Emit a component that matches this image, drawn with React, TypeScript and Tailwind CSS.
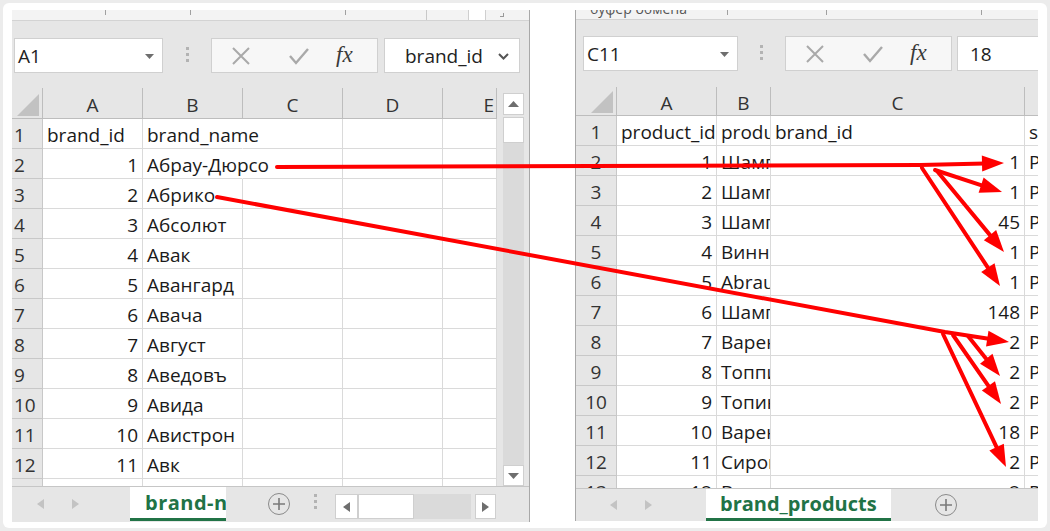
import React from "react";

type Cell = { t?: string; r?: boolean; over?: boolean };

const leftCols = ["w-[100px]", "w-[100px]", "w-[100px]", "w-[100px]", "w-[54px]"];
const rightCols = ["w-[100px]", "w-[54px]", "w-[254px]", "w-[40px]"];

const brands = [
  "Абрау-Дюрсо",
  "Абрико",
  "Абсолют",
  "Авак",
  "Авангард",
  "Авача",
  "Август",
  "Аведовъ",
  "Авида",
  "Авистрон",
  "Авк",
];

const products: [string, number][] = [
  ["Шампанское", 1],
  ["Шампанское", 1],
  ["Шампанское", 45],
  ["Винный напиток", 1],
  ["Abrau Light", 1],
  ["Шампанское", 148],
  ["Вареники", 2],
  ["Топпинг", 2],
  ["Топинамбур", 2],
  ["Вареники", 18],
  ["Сироп", 2],
];

const leftRows: Cell[][] = [
  [{ t: "brand_id" }, { t: "brand_name", over: true }, {}, {}, {}],
  ...brands.map((b, i) => [{ t: String(i + 1), r: true }, { t: b, over: i === 0 }, {}, {}, {}]),
  [{ t: "12", r: true }, { t: "Авто" }, {}, {}, {}],
];

const rightRows: Cell[][] = [
  [{ t: "product_id" }, { t: "product_name" }, { t: "brand_id" }, { t: "sku" }],
  ...products.map(([name, id], i) => [
    { t: String(i + 1), r: true },
    { t: name },
    { t: String(id), r: true },
    { t: "P" },
  ]),
  [{ t: "12", r: true }, { t: "Варенье" }, { t: "2", r: true }, { t: "P" }],
];

function GridRow({ num, cells, cols, headW }: { num: number; cells: Cell[]; cols: string[]; headW: string }) {
  return (
    <div className="flex h-[30px] shrink-0 bg-white">
      <div
        className={`${headW} flex shrink-0 items-center border-b border-r border-[#c8c8c8] bg-[#e6e6e6] pt-[4px] text-[19px] text-[#333] ${
          headW === "w-[31px]" ? "pl-[2px]" : "justify-center"
        }`}
      >
        {num}
      </div>
      {cells.map((c, i) => (
        <div
          key={i}
          className={`${cols[i]} flex shrink-0 items-center whitespace-nowrap border-b border-r border-[#dadada] px-[4px] pt-[4px] text-[19px] text-[#1a1a1a] ${
            c.r ? "justify-end" : ""
          } ${c.over ? "relative z-10 overflow-visible border-r-white" : "overflow-hidden"}`}
        >
          {c.t}
        </div>
      ))}
    </div>
  );
}

function HeaderRow({ letters, cols, headW }: { letters: string[]; cols: string[]; headW: string }) {
  return (
    <div className="flex h-full shrink-0">
      <div className={`${headW} flex shrink-0 items-end justify-end border-b border-r border-[#bdbdbd] bg-[#e6e6e6] pb-[2px] pr-[3px]`}>
        <svg width="22" height="22" viewBox="0 0 22 22">
          <polygon points="22,0 22,22 0,22" fill="#c2c2c2" />
        </svg>
      </div>
      {letters.map((l, i) => (
        <div
          key={i}
          className={`${cols[i]} flex shrink-0 items-center justify-center overflow-hidden border-b border-r border-[#bdbdbd] bg-[#e6e6e6] pt-[4px] text-[19px] text-[#333] ${
            i === letters.length - 1 && l === "E" ? "justify-end pr-[2px]" : ""
          }`}
        >
          {l}
        </div>
      ))}
    </div>
  );
}

function Dots() {
  return (
    <div className="flex flex-col gap-[3px]">
      <div className="h-[3px] w-[3px] bg-[#b3b3b3]" />
      <div className="h-[3px] w-[3px] bg-[#b3b3b3]" />
      <div className="h-[3px] w-[3px] bg-[#b3b3b3]" />
    </div>
  );
}

function FxBox() {
  return (
    <div className="flex h-[35px] w-[167px] shrink-0 items-center border border-[#d0d0d0] bg-[#f7f7f7]">
      <svg width="22" height="22" viewBox="0 0 22 22" className="ml-[18px]">
        <path d="M3 3 L19 19 M19 3 L3 19" stroke="#a9a9a9" strokeWidth="2" />
      </svg>
      <svg width="24" height="22" viewBox="0 0 24 22" className="ml-[35px]">
        <path d="M3 11 L9 18 L21 4" stroke="#a9a9a9" strokeWidth="2.4" fill="none" />
      </svg>
      <span className="ml-[25px] font-['Liberation_Serif',serif] text-[23px] italic text-[#3a3a3a]">fx</span>
    </div>
  );
}

function NameBox({ label, w }: { label: string; w: string }) {
  return (
    <div className={`${w} flex h-[35px] shrink-0 items-center justify-between border border-[#d0d0d0] bg-white pl-[3px] pr-[8px] pt-[2px] text-[19px] text-[#222]`}>
      <span>{label}</span>
      <svg width="9" height="6" viewBox="0 0 9 6">
        <polygon points="0,0 9,0 4.5,5" fill="#6e6e6e" />
      </svg>
    </div>
  );
}

function PlusCircle() {
  return (
    <div className="flex h-[22px] w-[22px] shrink-0 items-center justify-center rounded-full border-[1.5px] border-[#8a8a8a]">
      <svg width="12" height="12" viewBox="0 0 12 12">
        <path d="M6 0 V12 M0 6 H12" stroke="#7a7a7a" strokeWidth="1.6" />
      </svg>
    </div>
  );
}

function TabArrows() {
  return (
    <div className="flex items-center gap-[28px]">
      <svg width="7" height="10" viewBox="0 0 7 10">
        <polygon points="7,0 7,10 0,5" fill="#c3c3c3" />
      </svg>
      <svg width="7" height="10" viewBox="0 0 7 10">
        <polygon points="0,0 0,10 7,5" fill="#c3c3c3" />
      </svg>
    </div>
  );
}

function LeftWindow() {
  return (
    <div className="flex h-[512px] w-[518px] shrink-0 flex-col overflow-hidden border-r border-[#a8a8a8] bg-[#e6e6e6]">
      <div className="flex h-[11px] shrink-0 items-start border-b border-[#d3d3d3] bg-[#f3f3f3]">
        <div className="ml-[93px] h-[5px] w-px bg-[#a0a0a0]" />
        <div className="ml-[84px] h-[5px] w-px bg-[#a0a0a0]" />
        <div className="ml-[154px] h-[5px] w-px bg-[#a0a0a0]" />
        <div className="ml-[80px] h-[10px] w-px bg-[#c8c8c8]" />
        <div className="ml-[41px] h-[10px] w-[18px] border-l border-r border-[#cfcfcf] bg-white" />
        <div className="ml-[14px] mt-[3px] h-[4px] w-[4px] border-b border-r border-[#999]" />
      </div>
      <div className="flex h-[67px] shrink-0 items-start pl-[2px] pt-[17px]">
        <NameBox label="A1" w="w-[149px]" />
        <div className="flex w-[48px] shrink-0 justify-center pt-[9px]">
          <Dots />
        </div>
        <FxBox />
        <div className="ml-[6px] flex h-[35px] w-[136px] shrink-0 items-center justify-between border border-[#d0d0d0] bg-white pl-[20px] pr-[10px] pt-[2px] text-[19px] text-[#222]">
          <span>brand_id</span>
          <svg width="11" height="7" viewBox="0 0 11 7">
            <path d="M1 1 L5.5 5.5 L10 1" stroke="#555" strokeWidth="2" fill="none" />
          </svg>
        </div>
      </div>
      <div className="flex h-[398px] shrink-0">
        <div className="flex w-[485px] shrink-0 flex-col">
          <div className="h-[31px] shrink-0">
            <HeaderRow letters={["A", "B", "C", "D", "E"]} cols={leftCols} headW="w-[31px]" />
          </div>
          <div className="h-[367px] overflow-hidden">
            {leftRows.map((r, i) => (
              <GridRow key={i} num={i + 1} cells={r} cols={leftCols} headW="w-[31px]" />
            ))}
          </div>
        </div>
        <div className="flex w-[32px] shrink-0 flex-col pl-[6px] pr-[5px] pt-[5px]">
          <div className="flex h-[22px] items-center justify-center border border-[#cfcfcf] bg-white">
            <svg width="11" height="6" viewBox="0 0 11 6">
              <polygon points="0,6 11,6 5.5,0" fill="#6e6e6e" />
            </svg>
          </div>
          <div className="mt-[2px] h-[26px] border border-[#cfcfcf] bg-white" />
          <div className="flex-1 bg-[#dadada]" />
          <div className="flex h-[21px] items-center justify-center border border-[#cfcfcf] bg-white">
            <svg width="11" height="6" viewBox="0 0 11 6">
              <polygon points="0,0 11,0 5.5,6" fill="#6e6e6e" />
            </svg>
          </div>
        </div>
      </div>
      <div className="flex h-[36px] shrink-0 items-start border-t border-[#c6c6c6]">
        <div className="flex h-[33px] w-[118px] shrink-0 items-center pl-[25px]">
          <TabArrows />
        </div>
        <div className="flex h-[34px] w-[96px] shrink-0 items-center overflow-hidden whitespace-nowrap border-b-[3px] border-[#217346] bg-white pl-[15px] text-[20px] font-bold tracking-[0.5px] text-[#217346]">
          brand-names
        </div>
        <div className="ml-[42px] mt-[6px]">
          <PlusCircle />
        </div>
        <div className="ml-[24px] mt-[7px]">
          <Dots />
        </div>
        <div className="ml-[18px] mt-[7px] flex h-[25px] w-[161px] shrink-0">
          <div className="flex w-[23px] items-center justify-center border border-[#cfcfcf] bg-white">
            <svg width="7" height="10" viewBox="0 0 7 10">
              <polygon points="7,0 7,10 0,5" fill="#6e6e6e" />
            </svg>
          </div>
          <div className="w-[56px] border border-[#cfcfcf] bg-white" />
          <div className="flex-1 bg-[#dadada]" />
          <div className="ml-[4px] flex w-[21px] items-center justify-center border border-[#cfcfcf] bg-white">
            <svg width="7" height="10" viewBox="0 0 7 10">
              <polygon points="0,0 0,10 7,5" fill="#6e6e6e" />
            </svg>
          </div>
        </div>
      </div>
    </div>
  );
}

function RightWindow() {
  return (
    <div className="flex h-[511px] w-[463px] shrink-0 flex-col overflow-hidden border-l border-[#a8a8a8] bg-[#e6e6e6]">
      <div className="flex h-[10px] shrink-0 items-start overflow-hidden border-b border-[#d3d3d3] bg-[#f3f3f3]">
        <span className="-mt-[9px] ml-[14px] whitespace-nowrap text-[14px] leading-[16px] text-[#555]">буфер обмена</span>
        <div className="ml-[40px] h-[5px] w-px bg-[#a0a0a0]" />
        <div className="ml-[98px] h-[5px] w-px bg-[#a0a0a0]" />
        <div className="ml-[154px] h-[5px] w-px bg-[#a0a0a0]" />
      </div>
      <div className="flex h-[67px] shrink-0 items-start pl-[7px] pt-[16px]">
        <NameBox label="C11" w="w-[155px]" />
        <div className="flex w-[47px] shrink-0 justify-center pt-[9px]">
          <Dots />
        </div>
        <FxBox />
        <div className="ml-[5px] flex h-[35px] w-[100px] shrink-0 items-center border border-[#d0d0d0] bg-white pl-[12px] pt-[2px] text-[19px] text-[#222]">
          18
        </div>
      </div>
      <div className="h-[29px] shrink-0">
        <HeaderRow letters={["A", "B", "C", ""]} cols={rightCols} headW="w-[41px]" />
      </div>
      <div className="h-[372px] shrink-0 overflow-hidden">
        {rightRows.map((r, i) => (
          <GridRow key={i} num={i + 1} cells={r} cols={rightCols} headW="w-[41px]" />
        ))}
      </div>
      <div className="flex h-[33px] shrink-0 items-start border-t border-[#c6c6c6]">
        <div className="flex h-[31px] w-[130px] shrink-0 items-center pl-[34px]">
          <TabArrows />
        </div>
        <div className="flex h-[32px] w-[185px] shrink-0 items-center whitespace-nowrap border-b-[3px] border-[#217346] bg-white pl-[14px] text-[20px] font-bold text-[#217346]">
          brand_products
        </div>
        <div className="ml-[44px] mt-[5px]">
          <PlusCircle />
        </div>
      </div>
    </div>
  );
}

function Arrow({ pts }: { pts: [number, number][] }) {
  const [x2, y2] = pts[pts.length - 1];
  const [x1, y1] = pts[pts.length - 2];
  const len = Math.hypot(x2 - x1, y2 - y1);
  const ux = (x2 - x1) / len;
  const uy = (y2 - y1) / len;
  const L = 22;
  const W = 8;
  const bx = x2 - ux * L;
  const by = y2 - uy * L;
  const head = `${x2},${y2} ${bx - uy * W},${by + ux * W} ${bx + uy * W},${by - ux * W}`;
  const line = [...pts.slice(0, -1), [bx + ux * 3, by + uy * 3]].map((p) => p.join(",")).join(" ");
  return (
    <g>
      <polyline points={line} fill="none" stroke="#ff0000" strokeWidth={4} strokeLinejoin="round" strokeLinecap="round" />
      <polygon points={head} fill="#ff0000" />
    </g>
  );
}

const arrows: [number, number][][] = [
  [[277, 167], [920, 165], [1004, 163]],
  [[935, 170], [1002, 192]],
  [[937, 171], [1004, 252]],
  [[922, 168], [1000, 286]],
  [[217, 197], [945, 332], [1009, 342]],
  [[968, 336], [1000, 376]],
  [[953, 335], [1001, 404]],
  [[943, 334], [1006, 467]],
];

export default function App() {
  return (
    <div className="relative h-[531px] w-[1050px] overflow-hidden bg-[#ececec] p-[3px] font-['Open_Sans','Noto_Sans',sans-serif]">
      <div className="flex h-full rounded-[6px] bg-white pl-[9px] pt-[7px]">
        <LeftWindow />
        <div className="w-[45px] shrink-0" />
        <RightWindow />
      </div>
      <svg className="pointer-events-none absolute left-0 top-0" width="1050" height="531" viewBox="0 0 1050 531">
        {arrows.map((a, i) => (
          <Arrow key={i} pts={a} />
        ))}
      </svg>
    </div>
  );
}
